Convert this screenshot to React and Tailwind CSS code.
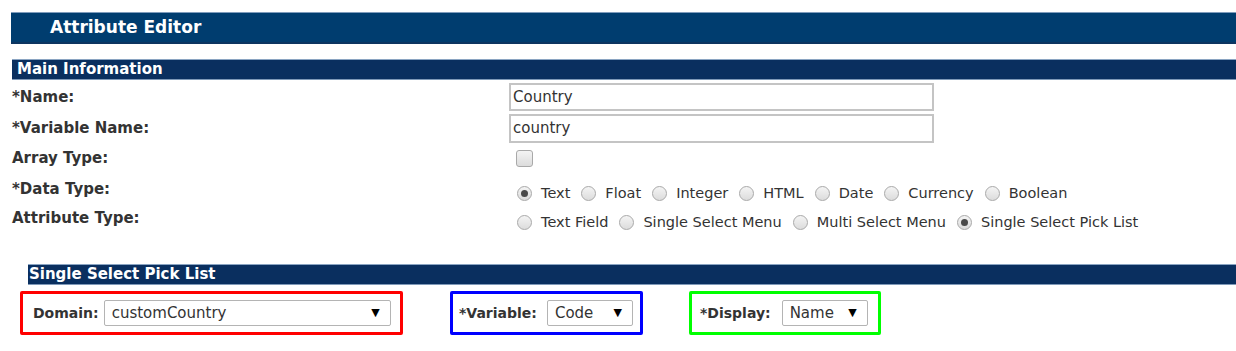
import { useState } from 'react'

const DATA_TYPES = ['Text', 'Float', 'Integer', 'HTML', 'Date', 'Currency', 'Boolean']
const ATTR_TYPES = ['Text Field', 'Single Select Menu', 'Multi Select Menu', 'Single Select Pick List']

const font = { fontFamily: 'Tahoma, "DejaVu Sans", "Liberation Sans", sans-serif' }

function Radio({ checked }) {
  return (
    <span className="inline-flex items-center justify-center w-[15px] h-[15px] rounded-full border border-[#a9a9a9] bg-gradient-to-b from-[#f4f4f4] to-[#dcdcdc] shrink-0">
      {checked && <span className="w-[7px] h-[7px] rounded-full bg-[#4a4a4a]" />}
    </span>
  )
}

function RadioGroup({ options, value }) {
  return (
    <div className="flex items-center gap-x-[11px] text-[14.5px] text-[#333]">
      {options.map(o => (
        <label key={o} className="flex items-center gap-[9px]">
          <Radio checked={o === value} />
          <span>{o}</span>
        </label>
      ))}
    </div>
  )
}

function Select({ value, width }) {
  return (
    <div className={`flex items-center justify-between h-[26px] border border-[#b4b4b4] rounded-[2px] bg-white pl-[7px] pr-[10px] text-[15px] text-[#333] ${width}`}>
      <span>{value}</span>
      <span className="text-[11px] text-black">▼</span>
    </div>
  )
}

function Row({ label, children, h = 'h-[30px]' }) {
  return (
    <div className={`grid grid-cols-[497px_1fr] items-center ${h}`}>
      <div className="text-[15px] font-bold text-[#333]">{label}</div>
      <div>{children}</div>
    </div>
  )
}

export default function App() {
  const [name] = useState('Country')
  return (
    <div className="bg-white w-[1236px] h-[351px] pt-[12px]" style={font}>
      <div className="ml-[11px] h-[32px] bg-[#003d6f] border-t border-[#7f9cbc] border-b-2 border-b-[#0d3560] flex items-center pl-[39px]">
        <span className="text-white font-bold text-[17px]">Attribute Editor</span>
      </div>

      <div className="ml-[12px] mt-[15px] h-[21px] bg-[#0a2f5f] border-t border-[#8aa4c2] border-b border-b-[#7f99b8] flex items-center pl-[5px]">
        <span className="text-white font-bold text-[15px]">Main Information</span>
      </div>

      <div className="pl-[12px] pt-[1px]">
        <Row label="*Name:" h="h-[32px]">
          <input readOnly value={name} className="w-[425px] h-[28px] border-2 border-[#c4c4c4] px-[2px] text-[15px] text-[#333] outline-none" />
        </Row>
        <Row label="*Variable Name:">
          <input readOnly value="country" className="w-[425px] h-[29px] border-2 border-[#c4c4c4] px-[2px] text-[15px] text-[#333] outline-none" />
        </Row>
        <Row label="Array Type:">
          <span className="block ml-[7px] w-[17px] h-[17px] rounded-[3px] border border-[#a9a9a9] bg-gradient-to-b from-[#f4f4f4] to-[#dcdcdc]" />
        </Row>
        <Row label="*Data Type:">
          <div className="ml-[8px] mt-[10px]"><RadioGroup options={DATA_TYPES} value="Text" /></div>
        </Row>
        <Row label="Attribute Type:">
          <div className="ml-[8px] mt-[9px]"><RadioGroup options={ATTR_TYPES} value="Single Select Pick List" /></div>
        </Row>
      </div>

      <div className="ml-[28px] mt-[31px] h-[21px] bg-[#0a2f5f] border-t border-[#8aa4c2] border-b border-b-[#7f99b8] flex items-center pl-[1px]">
        <span className="text-white font-bold text-[15px]">Single Select Pick List</span>
      </div>

      <div className="flex items-center mt-[6px] ml-[20px]">
        <div className="flex items-center w-[383px] h-[44px] border-[3px] border-[#ff0000] rounded-[2px] pl-[10px] gap-[5px]">
          <span className="text-[14px] font-bold text-[#333]">Domain:</span>
          <Select value="customCountry" width="w-[287px]" />
        </div>
        <div className="flex items-center ml-[47px] w-[193px] h-[44px] border-[3px] border-[#0000ff] rounded-[2px] pl-[6px] gap-[10px]">
          <span className="text-[14px] font-bold text-[#333]">*Variable:</span>
          <Select value="Code" width="w-[86px]" />
        </div>
        <div className="flex items-center ml-[46px] w-[192px] h-[44px] border-[3px] border-[#00ff00] rounded-[2px] pl-[8px] gap-[11px]">
          <span className="text-[14px] font-bold text-[#333]">*Display:</span>
          <Select value="Name" width="w-[86px]" />
        </div>
      </div>
    </div>
  )
}
